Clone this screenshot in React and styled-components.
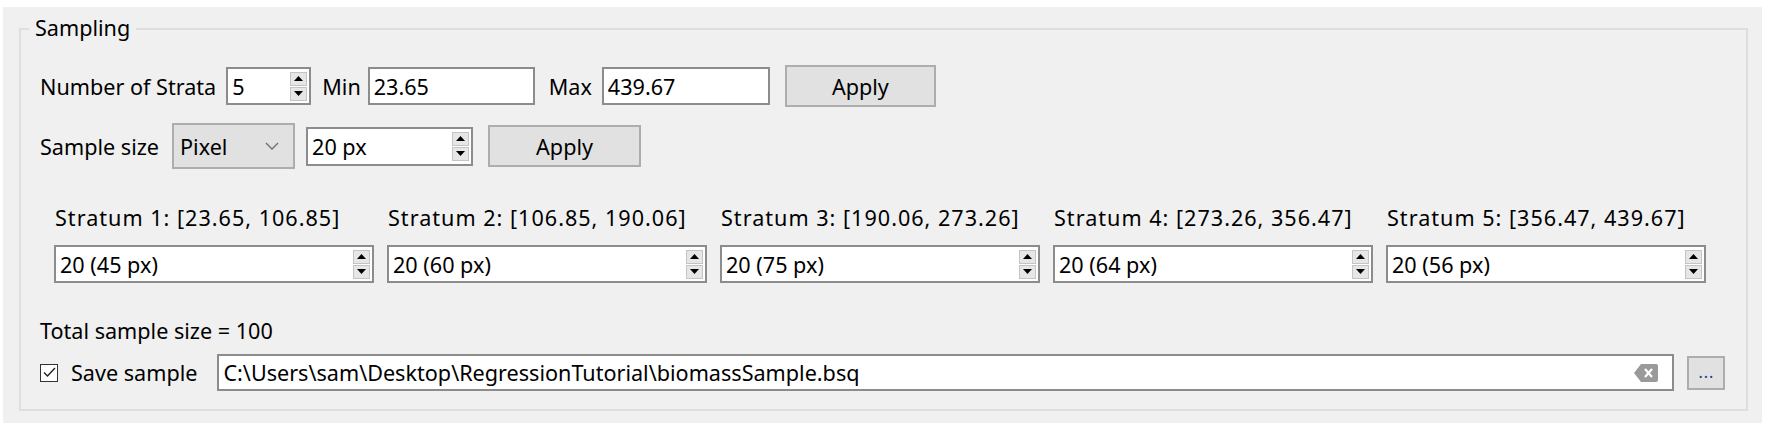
import styled, { createGlobalStyle } from "styled-components";

const GlobalStyle = createGlobalStyle`
  body {
    margin: 0;
    background: #ffffff;
    font-family: "Noto Sans", "Open Sans", sans-serif;
    font-size: 21.6px;
    color: #000;
  }
`;

const strata = [
  { range: "[23.65, 106.85]", value: "20 (45 px)" },
  { range: "[106.85, 190.06]", value: "20 (60 px)" },
  { range: "[190.06, 273.26]", value: "20 (75 px)" },
  { range: "[273.26, 356.47]", value: "20 (64 px)" },
  { range: "[356.47, 439.67]", value: "20 (56 px)" },
];

function Arrow({ down }) {
  return (
    <svg width="9" height="5" viewBox="0 0 9 5">
      <path d={down ? "M0 0 L9 0 L4.5 5 Z" : "M0 5 L9 5 L4.5 0 Z"} fill="#000" />
    </svg>
  );
}

function SpinBox({ value, width, height = 38 }) {
  return (
    <SpinFrame $width={width} $height={height}>
      <FieldText>{value}</FieldText>
      <SpinButtons>
        <SpinButton>
          <Arrow />
        </SpinButton>
        <SpinButton>
          <Arrow down />
        </SpinButton>
      </SpinButtons>
    </SpinFrame>
  );
}

export default function App() {
  return (
    <>
      <GlobalStyle />
      <Window>
        <GroupBox>
          <Legend>Sampling</Legend>

          <Row $top={17}>
            <Label>Number of Strata</Label>
            <SpinBox value="5" width={85} />
            <Label $ml={11} $mr={7}>Min</Label>
            <TextField $width={167}>23.65</TextField>
            <Label $ml={14}>Max</Label>
            <TextField $width={168}>439.67</TextField>
            <Button $ml={15} $width={151} $height={42}>
              Apply
            </Button>
          </Row>

          <Row $top={16}>
            <Label>Sample size</Label>
            <Combo>
              <span>Pixel</span>
              <svg width="14" height="8" viewBox="0 0 14 8">
                <path d="M1 1 L7 7 L13 1" fill="none" stroke="#6d6d6d" strokeWidth="1.3" />
              </svg>
            </Combo>
            <Gap $w={11} />
            <SpinBox value="20 px" width={167} height={39} />
            <Button $ml={15} $width={153} $height={42}>
              Apply
            </Button>
          </Row>

          <StrataGrid>
            {strata.map((s, i) => (
              <StratumCol key={i}>
                <StratumLabel>
                  Stratum {i + 1}: {s.range}
                </StratumLabel>
                <SpinBox value={s.value} width={320} height={38} />
              </StratumCol>
            ))}
          </StrataGrid>

          <TotalLine>Total sample size = 100</TotalLine>

          <Row $top={9}>
            <CheckBox>
              <svg width="13" height="11" viewBox="0 0 13 11">
                <path d="M1 5.5 L4.5 9 L12 1" fill="none" stroke="#222" strokeWidth="1.4" />
              </svg>
            </CheckBox>
            <Label $ml={13}>Save sample</Label>
            <PathField>
              <FieldText>C:\Users\sam\Desktop\RegressionTutorial\biomassSample.bsq</FieldText>
              <ClearIcon width="24" height="18" viewBox="0 0 24 18">
                <path d="M7 0 H22 Q24 0 24 2 V16 Q24 18 22 18 H7 L0 9 Z" fill="#9a9a9a" />
                <path d="M11 5 L18 13 M18 5 L11 13" stroke="#fff" strokeWidth="2.2" />
              </ClearIcon>
            </PathField>
            <Button $ml={13} $width={38} $height={34}>
              <Dots>...</Dots>
            </Button>
          </Row>
        </GroupBox>
      </Window>
    </>
  );
}

const Window = styled.div`
  margin: 7px 9px 0 3px;
  height: 416px;
  box-sizing: border-box;
  background: #f0f0f0;
  padding: 21px 14px 12px 16px;
`;

const GroupBox = styled.div`
  position: relative;
  height: 100%;
  box-sizing: border-box;
  border: 2px solid #dedede;
  padding: 18px 0 0 19px;
`;

const Legend = styled.div`
  position: absolute;
  top: -15px;
  left: 8px;
  padding: 0 6px 0 6px;
  background: #f0f0f0;
  line-height: 26px;
`;

const Row = styled.div`
  display: flex;
  align-items: center;
  margin-top: ${(p) => p.$top || 0}px;
`;

const Label = styled.span`
  white-space: nowrap;
  margin-left: ${(p) => p.$ml || 0}px;
  margin-right: ${(p) => p.$mr ?? 10}px;
`;

const Gap = styled.div`
  width: ${(p) => p.$w}px;
`;

const FieldText = styled.span`
  flex: 1;
  padding-left: 4px;
  white-space: nowrap;
  overflow: hidden;
`;

const TextField = styled.div`
  display: flex;
  align-items: center;
  box-sizing: border-box;
  width: ${(p) => p.$width}px;
  height: 38px;
  padding-left: 4px;
  background: #fff;
  border: 2px solid #8c8c8c;
`;

const SpinFrame = styled.div`
  display: flex;
  align-items: center;
  box-sizing: border-box;
  width: ${(p) => p.$width}px;
  height: ${(p) => p.$height}px;
  background: #fff;
  border: 2px solid #8c8c8c;
  padding-right: 2px;
`;

const SpinButtons = styled.div`
  display: flex;
  flex-direction: column;
  gap: 1px;
`;

const SpinButton = styled.div`
  display: flex;
  align-items: center;
  justify-content: center;
  width: 17px;
  height: 14px;
  box-sizing: border-box;
  background: #e6e6e6;
  border: 1px solid #c4c4c4;
`;

const Button = styled.div`
  display: flex;
  align-items: center;
  justify-content: center;
  box-sizing: border-box;
  width: ${(p) => p.$width}px;
  height: ${(p) => p.$height}px;
  margin-left: ${(p) => p.$ml || 0}px;
  background: #e1e1e1;
  border: 2px solid #adadad;
`;

const Combo = styled.div`
  display: flex;
  align-items: center;
  justify-content: space-between;
  box-sizing: border-box;
  width: 123px;
  height: 46px;
  margin-left: 3px;
  padding: 0 14px 0 6px;
  background: #e1e1e1;
  border: 2px solid #adadad;
`;

const StrataGrid = styled.div`
  display: grid;
  grid-template-columns: repeat(5, 320px);
  column-gap: 13px;
  margin: 34px 0 0 14px;
`;

const StratumCol = styled.div`
  display: flex;
  flex-direction: column;
  gap: 13px;
`;

const StratumLabel = styled.span`
  white-space: nowrap;
  padding-left: 1px;
  letter-spacing: 1px;
`;

const TotalLine = styled.div`
  margin-top: 33px;
`;

const CheckBox = styled.div`
  display: flex;
  align-items: center;
  justify-content: center;
  box-sizing: border-box;
  width: 18px;
  height: 18px;
  background: #fff;
  border: 1.5px solid #333;
`;

const PathField = styled.div`
  display: flex;
  align-items: center;
  box-sizing: border-box;
  width: 1457px;
  height: 37px;
  margin-left: 10px;
  padding-right: 14px;
  background: #fff;
  border: 2px solid #8c8c8c;
`;

const ClearIcon = styled.svg`
  flex: none;
`;

const Dots = styled.span`
  font-size: 16px;
  letter-spacing: 1px;
  color: #1a3a8a;
  margin-top: -2px;
`;
